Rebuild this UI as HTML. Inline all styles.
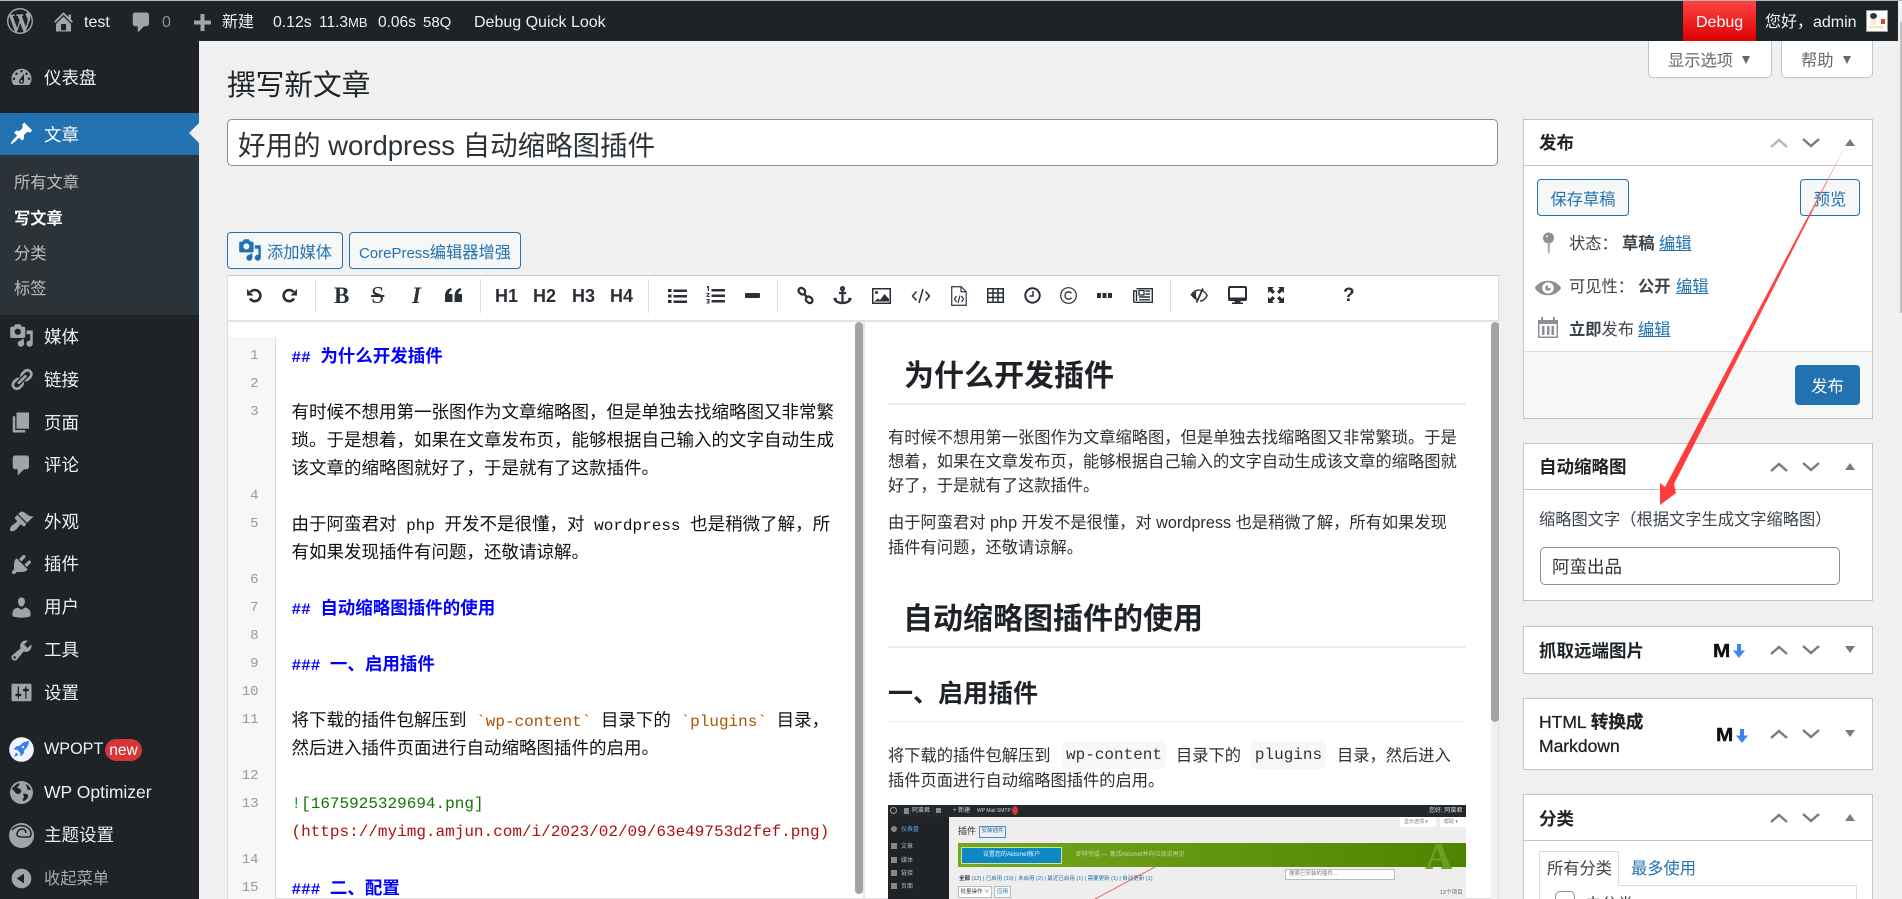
<!DOCTYPE html>
<html lang="zh-CN"><head><meta charset="utf-8"><title>撰写新文章</title>
<style>
html,body{margin:0;padding:0;width:1902px;height:899px;overflow:hidden;background:#f0f0f0}
body{position:relative;font:16.25px/24px "Liberation Sans","Noto Sans CJK SC",sans-serif;color:#3c434a}
.a,.t,svg.i{position:absolute}
.t{white-space:pre;height:24px;line-height:24px}
.s{color:#f0f0f1;font-size:17.5px;left:44px}
.sub{color:#bcbfc2;font-size:16.25px;left:14px}
.bar{color:#f0f0f1;font-size:16px}
svg.i{overflow:visible}
.ic{fill:#a0a5aa}
.box{position:absolute;left:1523px;width:350px;background:#fff;border:1px solid #c3c4c7;box-sizing:border-box}
.hl{position:absolute;left:1524px;width:348px;height:1px;background:#c3c4c7}
.bt{font-weight:700;font-size:17.5px;color:#1d2327;left:1539px}
.btn{position:absolute;box-sizing:border-box;border:1px solid #2271b1;border-radius:4px;background:#f6f7f7;color:#2271b1;text-align:center;font-size:16.25px}
.lnk{color:#2271b1;text-decoration:underline}
.ed{left:291.5px;height:28px;line-height:28px;font-size:17.5px;color:#111}
.m{font:16px/28px "Liberation Mono",monospace}
.hd{color:#00f;font-weight:700}
.ln{left:220px;width:38.5px;text-align:right;height:28px;line-height:28px;font:14px/28px "Liberation Mono",monospace;color:#999}
.o{color:#a50}.g{color:#170}.r{color:#a11}
.p{left:888px;font-size:16.25px;color:#2f2f2f}
.h{font-weight:700;color:#1f2328}
.hr{position:absolute;left:888px;width:578px;height:1px;background:#eaecef}
.code{position:absolute;background:#f7f7f7;border-radius:4px;top:741px;height:28px;font:16px/29px "Liberation Mono",monospace;text-align:center;color:#333}
.tb{fill:#2b3036}
.tbt{position:absolute;white-space:pre;color:#2b3036;top:284px;height:24px;line-height:24px}
.sep{position:absolute;top:279px;width:1px;height:34px;background:#ddd}
.mini{position:absolute;white-space:pre;font-size:6px;line-height:8px}
</style></head><body>

<div class="a" style="left:0;top:0;width:1902px;height:1px;background:#b5b5b5"></div>
<div class="a" style="left:0;top:1px;width:1898px;height:40px;background:#1d2327"></div>
<div class="a" style="left:0;top:41px;width:199px;height:858px;background:#1d2327"></div>
<div class="a" style="left:1898px;top:1px;width:4px;height:898px;background:#f0f0f0"></div>
<div class="a" style="left:1900px;top:22px;width:2px;height:291px;background:#c0c0c0"></div>

<!-- admin bar -->
<svg class="i" style="left:7px;top:8px" width="26" height="26" viewBox="0 0 20 20"><path class="ic" d="M20 10c0-5.51-4.49-10-10-10C4.48 0 0 4.49 0 10c0 5.52 4.48 10 10 10 5.51 0 10-4.48 10-10zM7.78 15.37L4.37 6.22c.55-.02 1.17-.08 1.17-.08.5-.06.44-1.13-.06-1.11 0 0-1.45.11-2.37.11-.18 0-.37 0-.58-.01C4.12 2.69 6.87 1.11 10 1.11c2.33 0 4.45.87 6.05 2.34-.68-.11-1.65.39-1.65 1.58 0 .74.45 1.36.9 2.1.35.61.55 1.36.55 2.46 0 1.49-1.4 5-1.4 5l-3.03-8.37c.54-.02.82-.17.82-.17.5-.05.44-1.25-.06-1.22 0 0-1.44.12-2.38.12-.87 0-2.33-.12-2.33-.12-.5-.03-.56 1.2-.06 1.22l.92.08 1.26 3.41zM17.41 10c.24-.64.74-1.87.43-4.25.7 1.29 1.05 2.71 1.05 4.25 0 3.29-1.73 6.24-4.4 7.78.97-2.59 1.94-5.2 2.92-7.78zM6.1 18.09C3.12 16.65 1.11 13.53 1.11 10c0-1.3.23-2.48.72-3.59C3.25 10.3 4.67 14.2 6.1 18.09zm4.03-6.63l2.58 6.98c-.86.29-1.76.45-2.71.45-.79 0-1.57-.11-2.29-.33.81-2.38 1.62-4.74 2.42-7.1z"/></svg>
<svg class="i" style="left:51px;top:9px" width="25" height="25" viewBox="0 0 20 20"><path class="ic" d="M16 8.5l1.53 1.53-1.06 1.06L10 4.62l-6.47 6.47-1.06-1.06L10 2.5l4 4v-2h2v4zm-6-2.46l6 5.99V18H4v-5.97zM12 17v-5H8v5h4z"/></svg>
<div class="t bar" style="left:84px;top:11px">test</div>
<svg class="i" style="left:129px;top:10px" width="25" height="25" viewBox="0 0 20 20"><path class="ic" d="M5 2h9c1.1 0 2 .9 2 2v7c0 1.1-.9 2-2 2h-2l-5 5v-5H5c-1.1 0-2-.9-2-2V4c0-1.1.9-2 2-2z"/></svg>
<div class="t bar" style="left:162px;top:11px;color:#8b9096">0</div>
<svg class="i" style="left:194px;top:14px" width="17" height="17" viewBox="0 0 17 17"><path class="ic" d="M6.5 0h4v6.5H17v4h-6.5V17h-4v-6.5H0v-4h6.5z"/></svg>
<div class="t bar" style="left:222px;top:11px">新建</div>
<div class="t bar" style="left:273px;top:11px;font-size:15.800px">0.12s</div>
<div class="t bar" style="left:319px;top:11px;font-size:15.500px">11.3<span style="font-size:13px">MB</span></div>
<div class="t bar" style="left:378px;top:11px;font-size:15.500px">0.06s</div>
<div class="t bar" style="left:423px;top:11px;font-size:15px">58Q</div>
<div class="t bar" style="left:474px;top:11px">Debug Quick Look</div>
<div class="a" style="left:1683px;top:1px;width:73px;height:40px;background:linear-gradient(#f44,#d00)"></div>
<div class="t bar" style="left:1696px;top:11px;color:#fff">Debug</div>
<div class="t bar" style="left:1765px;top:11px">您好，admin</div>
<div class="a" style="left:1866px;top:10px;width:22px;height:22px;background:#fff;border:1px solid #9a9a9a;box-sizing:border-box;overflow:hidden">
 <div class="a" style="left:3px;top:2px;width:7px;height:6px;border-radius:50%;background:#333"></div>
 <div class="a" style="left:4px;top:8px;width:5px;height:6px;background:#f6e7d8"></div>
 <div class="a" style="left:14px;top:8px;width:4px;height:5px;background:#d8453a"></div>
 <div class="a" style="left:2px;top:15px;width:14px;height:2px;background:#f3ec9a"></div>
</div>

<!-- sidebar -->
<svg class="i" style="left:9px;top:65px" width="25" height="25" viewBox="0 0 20 20"><path class="ic" d="M3.76 16h12.48c1.1-1.37 1.76-3.11 1.76-5 0-4.42-3.58-8-8-8s-8 3.58-8 8c0 1.89.66 3.63 1.76 5zM10 4c.55 0 1 .45 1 1s-.45 1-1 1-1-.45-1-1 .45-1 1-1zM6 6c.55 0 1 .45 1 1s-.45 1-1 1-1-.45-1-1 .45-1 1-1zm8 0c.55 0 1 .45 1 1s-.45 1-1 1-1-.45-1-1 .45-1 1-1zm-5.37 5.55L12 7v6c0 1.1-.9 2-2 2s-2-.9-2-2c0-.57.24-1.08.63-1.45zM4 10c.55 0 1 .45 1 1s-.45 1-1 1-1-.45-1-1 .45-1 1-1zm12 0c.55 0 1 .45 1 1s-.45 1-1 1-1-.45-1-1 .45-1 1-1zm-5 3c0-.55-.45-1-1-1s-1 .45-1 1 .45 1 1 1 1-.45 1-1z"/></svg>
<div class="t s" style="top:66px">仪表盘</div>
<div class="a" style="left:0;top:113px;width:199px;height:42px;background:#2271b1"></div>
<div class="a" style="left:189px;top:123px;width:0;height:0;border:solid transparent;border-width:10.5px 10px 10.5px 0;border-right-color:#f0f0f0"></div>
<svg class="i" style="left:9px;top:121px" width="25" height="25" viewBox="0 0 20 20"><path fill="#fff" d="M10.44 3.02l1.82-1.82 6.36 6.35-1.83 1.82c-1.05-.68-2.48-.57-3.41.36l-.75.75c-.92.93-1.04 2.35-.35 3.41l-1.83 1.82-2.41-2.41-2.8 2.79c-.42.42-3.38 2.71-3.8 2.29s1.86-3.39 2.28-3.81l2.79-2.79L4.1 9.36l1.83-1.82c1.05.69 2.48.57 3.4-.36l.75-.75c.93-.92 1.05-2.35.36-3.41z"/></svg>
<div class="t s" style="top:123px;color:#fff">文章</div>
<div class="a" style="left:0;top:155px;width:199px;height:160px;background:#2c3338"></div>
<div class="t sub" style="top:171px">所有文章</div>
<div class="t sub" style="top:207px;color:#fff;font-weight:700">写文章</div>
<div class="t sub" style="top:242px">分类</div>
<div class="t sub" style="top:277px">标签</div>

<svg class="i" style="left:9px;top:323px" width="25" height="25" viewBox="0 0 20 20"><path class="ic" d="M13 11V4c0-.55-.45-1-1-1h-1.67L9 1H5L3.67 3H2c-.55 0-1 .45-1 1v7c0 .55.45 1 1 1h10c.55 0 1-.45 1-1zM7 4.5c1.38 0 2.5 1.12 2.5 2.5S8.38 9.5 7 9.5 4.5 8.38 4.5 7 5.62 4.5 7 4.5zM14 6h5v10.5c0 1.38-1.12 2.5-2.5 2.5S14 17.88 14 16.5s1.12-2.5 2.5-2.5c.17 0 .34.02.5.05V9h-3V6zm-4 8.05V13h2v3.5c0 1.38-1.12 2.5-2.5 2.5S7 17.88 7 16.5 8.12 14 9.5 14c.17 0 .34.02.5.05z"/></svg>
<div class="t s" style="top:325px">媒体</div>
<svg class="i" style="left:9px;top:367px" width="25" height="25" viewBox="0 0 20 20"><path class="ic" d="M17.74 2.76c1.68 1.69 1.68 4.41 0 6.1l-1.53 1.52c-1.12 1.12-2.7 1.47-4.14 1.09l2.62-2.61.76-.77.76-.76c.84-.84.84-2.2 0-3.04-.84-.85-2.2-.85-3.04 0l-.77.76-3.38 3.38c-.37-1.44-.02-3.02 1.1-4.14l1.52-1.53c1.69-1.68 4.42-1.68 6.1 0zM8.59 13.43l5.34-5.34c.42-.42.42-1.1 0-1.52-.44-.43-1.13-.39-1.53 0l-5.33 5.34c-.42.42-.42 1.1 0 1.52.44.43 1.13.39 1.52 0zm-.76 2.29l4.14-4.15c.38 1.44.03 3.02-1.09 4.14l-1.52 1.53c-1.69 1.68-4.41 1.68-6.1 0-1.68-1.68-1.68-4.42 0-6.1l1.53-1.52c1.12-1.12 2.7-1.47 4.14-1.1l-4.14 4.15c-.85.84-.85 2.2 0 3.05.84.84 2.2.84 3.04 0z"/></svg>
<div class="t s" style="top:368px">链接</div>
<svg class="i" style="left:9px;top:410px" width="25" height="25" viewBox="0 0 20 20"><path class="ic" d="M6 15V2h10v13H6zm-1 1h8v2H3V5h2v11z"/></svg>
<div class="t s" style="top:411px">页面</div>
<svg class="i" style="left:9px;top:453px" width="25" height="25" viewBox="0 0 20 20"><path class="ic" d="M5 2h9c1.1 0 2 .9 2 2v7c0 1.1-.9 2-2 2h-2l-5 5v-5H5c-1.1 0-2-.9-2-2V4c0-1.1.9-2 2-2z"/></svg>
<div class="t s" style="top:453px">评论</div>
<svg class="i" style="left:9px;top:509px" width="25" height="25" viewBox="0 0 20 20"><path class="ic" d="M14.48 11.06L7.41 3.99l1.5-1.5c.5-.56 2.3-.47 3.51.32 1.21.8 1.43 1.28 2.91 2.1 1.18.64 2.45 1.26 4.45.85zm-.71.71L6.7 4.7 4.93 6.47c-.39.39-.39 1.02 0 1.41l1.06 1.06c.39.39.39 1.03 0 1.42-.6.6-1.43 1.11-2.21 1.69-.35.26-.7.53-1.01.84C1.43 13.73 0 16.29 1.2 17.49c1.19 1.19 3.75-.24 5.07-1.56.31-.31.58-.66.85-1.02.57-.78 1.08-1.61 1.69-2.21.39-.39 1.02-.39 1.41 0l1.06 1.06c.39.39 1.02.39 1.41 0z"/></svg>
<div class="t s" style="top:510px">外观</div>
<svg class="i" style="left:9px;top:552px" width="25" height="25" viewBox="0 0 20 20"><path class="ic" d="M13.11 4.36L9.87 7.6 8 5.73l3.24-3.24c.35-.34 1.05-.2 1.56.32.52.51.66 1.21.31 1.55zm-8 1.77l.91-1.12 9.01 9.01-1.19.84c-.71.71-2.63 1.16-3.82 1.16H6.14L4.9 17.26c-.59.59-1.54.59-2.12 0-.59-.58-.59-1.53 0-2.12l1.24-1.24v-3.88c0-1.13.4-3.19 1.09-3.89zm7.26 3.97l3.24-3.24c.34-.35 1.04-.21 1.55.31.52.51.66 1.21.31 1.55l-3.24 3.25z"/></svg>
<div class="t s" style="top:552px">插件</div>
<svg class="i" style="left:9px;top:595px" width="25" height="25" viewBox="0 0 20 20"><path class="ic" d="M10 9.25c-2.27 0-2.73-3.44-2.73-3.44C7 4.02 7.82 2 9.97 2c2.16 0 2.98 2.02 2.71 3.81 0 0-.41 3.44-2.68 3.44zm0 2.57L12.72 10c2.39 0 4.52 2.33 4.52 4.53v2.49s-3.65 1.13-7.24 1.13c-3.65 0-7.24-1.13-7.24-1.13v-2.49c0-2.25 1.94-4.48 4.47-4.48z"/></svg>
<div class="t s" style="top:595px">用户</div>
<svg class="i" style="left:9px;top:638px" width="25" height="25" viewBox="0 0 20 20"><path class="ic" d="M16.68 9.77c-1.34 1.34-3.3 1.67-4.95.99l-5.41 6.52c-.99.99-2.59.99-3.58 0s-.99-2.59 0-3.57l6.52-5.42c-.68-1.65-.35-3.61.99-4.95 1.28-1.28 3.12-1.62 4.72-1.06l-2.89 2.89 2.82 2.82 2.86-2.87c.53 1.58.18 3.39-1.08 4.65zM3.81 16.21c.4.39 1.04.39 1.43 0 .4-.4.4-1.04 0-1.43-.39-.4-1.03-.4-1.43 0-.39.39-.39 1.03 0 1.43z"/></svg>
<div class="t s" style="top:638px">工具</div>
<svg class="i" style="left:9px;top:680px" width="25" height="25" viewBox="0 0 20 20"><path class="ic" d="M18 16V4c0-.55-.45-1-1-1H3c-.55 0-1 .45-1 1v12c0 .55.45 1 1 1h14c.55 0 1-.45 1-1zM8 11h1c.55 0 1 .45 1 1s-.45 1-1 1H8v1.5c0 .28-.22.5-.5.5s-.5-.22-.5-.5V13H6c-.55 0-1-.45-1-1s.45-1 1-1h1V5.5c0-.28.22-.5.5-.5s.5.22.5.5V11zm5-2h-1c-.55 0-1-.45-1-1s.45-1 1-1h1V5.5c0-.28.22-.5.5-.5s.5.22.5.5V7h1c.55 0 1 .45 1 1s-.45 1-1 1h-1v5.5c0 .28-.22.5-.5.5s-.5-.22-.5-.5V9z"/></svg>
<div class="t s" style="top:681px">设置</div>

<svg class="i" style="left:9px;top:737px" width="25" height="25" viewBox="0 0 25 25"><circle cx="12.5" cy="12.5" r="12.3" fill="#f0f4ff"/><path fill="#3b7df0" d="M20 4c-4 .3-7 1.8-9.300 4.800l-3.500.6-2.700 3.100 3.600.3 3.100 3.100.3 3.600 3.100-2.700.6-3.500C18.200 11 19.700 8 20 4zM7 15.500l2.500 2.500L5 20z"/><circle cx="14" cy="10" r="1.200" fill="#f0f4ff"/></svg>
<div class="t s" style="top:737px;font-size:16.200px">WPOPT</div>
<div class="a" style="left:105px;top:739px;width:37px;height:22px;border-radius:11px;background:#d63638;color:#fff;text-align:center;font-size:15.5px;line-height:24px">new</div>
<svg class="i" style="left:9px;top:780px" width="25" height="25" viewBox="0 0 25 25"><circle cx="12.500" cy="12.500" r="11.500" class="ic"/><path fill="#1d2327" d="M3 8c2-1 4-4 7-5 1 2 0 3-2 4 1 2 3 1 4 3s-1 4-3 4-3-2-4-3-2-2-2-3zM14 14c2-1 4 0 5 1 1 2-2 6-5 6-1-2 1-3 1-4s-1-2-1-3zM17 4c2 1 4 3 5 6-2 0-4 0-4-2s-1-2-1-4z"/></svg>
<div class="t s" style="top:780px">WP Optimizer</div>
<svg class="i" style="left:9px;top:823px" width="25" height="25" viewBox="0 0 25 25"><circle cx="12.500" cy="12.500" r="12.500" class="ic"/><path fill="none" stroke="#1d2327" stroke-width="1.500" d="M3 7c3-3.500 8-5 12-4s7 4 7 8-3 3-8 3-6-1-6-3 2-5 5-5 4 2 4 4"/></svg>
<div class="t s" style="top:823px">主题设置</div>
<svg class="i" style="left:9px;top:866px" width="25" height="25" viewBox="0 0 20 20"><path class="ic" d="M10 2.160c4.330 0 7.840 3.510 7.840 7.840s-3.510 7.840-7.840 7.840S2.160 14.330 2.160 10 5.710 2.160 10 2.160zm2 11.720V6.120L6.180 9.970z"/></svg>
<div class="t" style="left:44px;top:867px;color:#a7aaad">收起菜单</div>

<!-- screen meta -->
<div class="a" style="left:1648px;top:36px;width:124px;height:42px;background:#fff;border:1px solid #c3c4c7;border-radius:0 0 5px 5px;box-sizing:border-box"></div>
<div class="t" style="left:1668px;top:49px;color:#646970">显示选项</div>
<div class="a" style="left:1742px;top:56px;border:solid transparent;border-width:8px 4.500px 0;border-top-color:#646970"></div>
<div class="a" style="left:1781px;top:36px;width:92px;height:42px;background:#fff;border:1px solid #c3c4c7;border-radius:0 0 5px 5px;box-sizing:border-box"></div>
<div class="t" style="left:1801px;top:49px;color:#646970">帮助</div>
<div class="a" style="left:1843px;top:56px;border:solid transparent;border-width:8px 4.500px 0;border-top-color:#646970"></div>
<div class="a" style="left:1648px;top:36px;width:35px;height:5px;background:#1d2327"></div>
<div class="a" style="left:1756px;top:36px;width:120px;height:5px;background:#1d2327"></div>
<div class="a" style="left:1683px;top:36px;width:73px;height:5px;background:#dc0606"></div>

<!-- title -->
<div class="t" style="left:227px;top:71px;height:30px;line-height:30px;font-size:28.700px;color:#1d2327">撰写新文章</div>
<div class="a" style="left:227px;top:119px;width:1271px;height:47px;background:#fff;border:1px solid #8c8f94;border-radius:5px;box-sizing:border-box"></div>
<div class="t" style="left:238px;top:128px;height:36px;line-height:36px;font-size:27.500px;color:#2c3338">好用的 wordpress 自动缩略图插件</div>

<div class="btn" style="left:227px;top:232px;width:116px;height:37px;line-height:41px;padding-left:29px">添加媒体</div>
<svg class="i" style="left:238px;top:238px" width="24" height="24" viewBox="0 0 20 20"><path fill="#2271b1" d="M13 11V4c0-.55-.45-1-1-1h-1.670L9 1H5L3.670 3H2c-.55 0-1 .45-1 1v7c0 .55.45 1 1 1h10c.55 0 1-.45 1-1zM7 4.500c1.380 0 2.500 1.120 2.500 2.500S8.380 9.500 7 9.500 4.500 8.380 4.500 7 5.620 4.500 7 4.500zM14 6h5v10.500c0 1.380-1.120 2.500-2.500 2.500S14 17.880 14 16.500s1.120-2.500 2.500-2.500c.17 0 .34.02.5.05V9h-3V6zm-4 8.050V13h2v3.500c0 1.380-1.120 2.500-2.500 2.500S7 17.880 7 16.500 8.120 14 9.500 14c.17 0 .34.02.5.05z"/></svg>
<div class="btn" style="left:349px;top:232px;width:172px;height:37px;line-height:41px"><span style="font-size:15px">CorePress</span>编辑器增强</div>

<!-- editor shell -->
<div class="a" style="left:227px;top:275px;width:1272px;height:624px;background:#fff;border:1px solid #ddd;border-top-color:#c6c7c9;box-sizing:border-box"></div>
<div class="a" style="left:228px;top:320px;width:1270px;height:2px;background:#e2e2e2"></div>

<!-- toolbar icons -->
<svg class="i" style="left:246px;top:287px" width="17" height="17" viewBox="0 0 17 17"><path fill="none" stroke="#2b3036" stroke-width="2.600" d="M4 11.500A5.600 5.600 0 1 0 4.500 5"/><path class="tb" d="M1 2v6.500h6.500z"/></svg>
<svg class="i" style="left:281px;top:287px" width="17" height="17" viewBox="0 0 17 17"><path fill="none" stroke="#2b3036" stroke-width="2.600" d="M13 11.500A5.600 5.600 0 1 1 12.500 5"/><path class="tb" d="M16 2v6.500H9.500z"/></svg>
<div class="sep" style="left:315px"></div>
<div class="tbt" style="left:334px;font:700 23px/24px 'Liberation Serif',serif">B</div>
<div class="tbt" style="left:371px;font:400 24px/24px 'Liberation Serif',serif;text-decoration:line-through">S</div>
<div class="tbt" style="left:412px;font:italic 700 23px/24px 'Liberation Serif',serif">I</div>
<svg class="i" style="left:445px;top:288px" width="17" height="15" viewBox="0 0 17 15"><path class="tb" d="M0 8c0-4 2-7 6-8l.8 2C5 3 4 4 4 6h3.500v8H0zM9.500 8c0-4 2-7 6-8l.8 2c-1.800 1-2.800 2-2.800 4H17v8H9.500z"/></svg>
<div class="sep" style="left:480px"></div>
<div class="tbt" style="left:495px;font:700 18px/24px 'Liberation Sans',sans-serif">H1</div>
<div class="tbt" style="left:533px;font:700 18px/24px 'Liberation Sans',sans-serif">H2</div>
<div class="tbt" style="left:572px;font:700 18px/24px 'Liberation Sans',sans-serif">H3</div>
<div class="tbt" style="left:610px;font:700 18px/24px 'Liberation Sans',sans-serif">H4</div>
<div class="sep" style="left:648px"></div>
<svg class="i" style="left:668px;top:288px" width="19" height="16" viewBox="0 0 19 16"><path class="tb" d="M0 1h3.500v3H0zM0 6.500h3.500v3H0zM0 12h3.500v3H0zM5.500 1.500H19v2.500H5.500zM5.500 7H19v2.500H5.500zM5.500 12.500H19V15H5.500z"/></svg>
<svg class="i" style="left:706px;top:286px" width="19" height="19" viewBox="0 0 19 19"><path class="tb" d="M5.500 3H19v2.500H5.500zM5.500 8.500H19V11H5.500zM5.500 14H19v2.500H5.500zM1 0h2v5H1.800V1.500H1zM.5 7h3v1L1.800 10h1.800v1H.5v-1l1.800-2H.5zM.5 13h3v4.500H.5v-1h2v-.8H1v-1h1.500V14h-2z"/></svg>
<svg class="i" style="left:745px;top:293px" width="15" height="5" viewBox="0 0 15 5"><rect width="15" height="5" rx="1" class="tb"/></svg>
<div class="sep" style="left:777px"></div>
<svg class="i" style="left:797px;top:287px" width="17" height="17" viewBox="0 0 17 17"><g fill="none" stroke="#2b3036" stroke-width="2.300"><rect x="1.500" y="1.500" width="7" height="5.500" rx="2.700" transform="rotate(40 5 4)"/><rect x="8.500" y="10" width="7" height="5.500" rx="2.700" transform="rotate(40 12 13)"/><path d="M6.500 6.500l4 4"/></g></svg>
<svg class="i" style="left:833px;top:286px" width="19" height="19" viewBox="0 0 19 19"><g fill="none" stroke="#2b3036" stroke-width="2.200"><circle cx="9.500" cy="2.600" r="1.500"/><path d="M9.500 4v13.500M6 7h7M1.500 12c0 3 3.500 5 8 5s8-2 8-5"/></g><path class="tb" d="M0 12.500l3.500-1 .5 3.500zM19 12.500l-3.500-1-.5 3.500z"/></svg>
<svg class="i" style="left:872px;top:288px" width="19" height="16" viewBox="0 0 19 16"><rect x=".75" y=".75" width="17.500" height="14.500" fill="none" stroke="#2b3036" stroke-width="1.500"/><circle cx="4.500" cy="4.500" r="1.500" class="tb"/><path class="tb" d="M2 13.500l4-3 2 1.500 4.500-6 4.500 5v2.500z"/></svg>
<svg class="i" style="left:911px;top:288px" width="20" height="16" viewBox="0 0 20 16"><path fill="none" stroke="#2b3036" stroke-width="1.500" d="M5.500 3.500L1.500 8l4 4.500M14.500 3.500l4 4.500-4 4.500M12 1L8 15"/></svg>
<svg class="i" style="left:951px;top:286px" width="16" height="20" viewBox="0 0 16 20"><path fill="none" stroke="#3a4a58" stroke-width="1.300" d="M.7.7h9.500l5 5v13.600H.7zM10 .7v5h5.200"/><path fill="none" stroke="#2b3036" stroke-width="1.200" d="M5.500 10L3.500 13l2 3M10.500 10l2 3-2 3M9 9.500l-2 7.500"/></svg>
<svg class="i" style="left:987px;top:288px" width="17" height="15" viewBox="0 0 17 15"><path fill="none" stroke="#2b3036" stroke-width="1.500" d="M.75.75h15.500v13.500H.75zM.75 5h15.500M.75 9.500h15.500M6 .75v13.500M11 .75v13.500"/></svg>
<svg class="i" style="left:1024px;top:287px" width="17" height="17" viewBox="0 0 17 17"><circle cx="8.500" cy="8.500" r="7.200" fill="none" stroke="#2b3036" stroke-width="2"/><path fill="none" stroke="#2b3036" stroke-width="1.500" d="M9 4v5H5.500"/></svg>
<svg class="i" style="left:1060px;top:287px" width="17" height="17" viewBox="0 0 17 17"><circle cx="8.500" cy="8.500" r="7.800" fill="none" stroke="#2b3036" stroke-width="1.200"/><path fill="none" stroke="#2b3036" stroke-width="1.300" d="M11.500 6.200a3.700 3.700 0 1 0 0 4.600"/></svg>
<svg class="i" style="left:1097px;top:293px" width="15" height="5" viewBox="0 0 15 5"><path class="tb" d="M0 0h4v5H0zM5.500 0h4v5h-4zM11 0h4v5h-4z"/></svg>
<svg class="i" style="left:1133px;top:288px" width="20" height="15" viewBox="0 0 20 15"><path fill="none" stroke="#2b3036" stroke-width="1.400" d="M3.500.7h15.800v13.600H2A1.300 1.300 0 0 1 .7 13V3h2.800v10M6 11.800h11M6 9h11M12.500 3H17M12.500 6H17"/><rect x="6" y="2.500" width="5" height="4.500" fill="none" stroke="#2b3036" stroke-width="1.300"/></svg>
<div class="sep" style="left:1170px"></div>
<svg class="i" style="left:1190px;top:288px" width="18" height="15" viewBox="0 0 18 15"><path fill="none" stroke="#2b3036" stroke-width="1.300" d="M.8 7.500C3 3.500 6 2 9 2s6 1.500 8.200 5.500C15 11.500 12.500 13 10 13"/><path class="tb" d="M1.500 7.500C3 5 5 3.500 7 3.200c-1.500 1.500-1.500 5 .5 9C4.500 11.500 3 10 1.500 7.500z"/><path fill="none" stroke="#2b3036" stroke-width="1.800" d="M13 .5L6.500 14.500"/></svg>
<svg class="i" style="left:1228px;top:286px" width="19" height="18" viewBox="0 0 19 18"><path class="tb" d="M2 0h15a2 2 0 0 1 2 2v11a2 2 0 0 1-2 2h-4.500v1.500H15V18H4v-1.500h2.500V15H2a2 2 0 0 1-2-2V2a2 2 0 0 1 2-2zM2 2v9.500h15V2z" fill-rule="evenodd"/></svg>
<svg class="i" style="left:1268px;top:287px" width="16" height="16" viewBox="0 0 16 16"><path class="tb" d="M0 0h6L4.200 1.800l2.800 2.800-2.400 2.400-2.800-2.800L0 6zM16 0v6l-1.800-1.800-2.800 2.800-2.400-2.400 2.800-2.800L10 0zM0 16v-6l1.800 1.800 2.800-2.800 2.400 2.400-2.800 2.800L6 16zM16 16h-6l1.800-1.800-2.800-2.800 2.400-2.400 2.800 2.800L16 10z"/></svg>
<div class="tbt" style="left:1343px;font:700 19px/24px 'Liberation Sans',sans-serif">?</div>

<!-- gutter -->
<div class="a" style="left:228px;top:337px;width:47px;height:562px;background:#f7f7f7;border-right:1px solid #ddd"></div>
<div class="t ln" style="top:342px">1</div><div class="t ln" style="top:370px">2</div><div class="t ln" style="top:398px">3</div>
<div class="t ln" style="top:482px">4</div><div class="t ln" style="top:510px">5</div><div class="t ln" style="top:566px">6</div>
<div class="t ln" style="top:594px">7</div><div class="t ln" style="top:622px">8</div><div class="t ln" style="top:650px">9</div>
<div class="t ln" style="top:678px">10</div><div class="t ln" style="top:706px">11</div><div class="t ln" style="top:762px">12</div>
<div class="t ln" style="top:790px">13</div><div class="t ln" style="top:846px">14</div><div class="t ln" style="top:874px">15</div>

<!-- editor text -->
<div class="t ed hd" style="top:342px"><span class="m" style="font-weight:700">## </span>为什么开发插件</div>
<div class="t ed" style="top:398px">有时候不想用第一张图作为文章缩略图，但是单独去找缩略图又非常繁</div>
<div class="t ed" style="top:426px">琐。于是想着，如果在文章发布页，能够根据自己输入的文字自动生成</div>
<div class="t ed" style="top:454px">该文章的缩略图就好了，于是就有了这款插件。</div>
<div class="t ed" style="top:510px">由于阿蛮君对<span class="m"> php </span>开发不是很懂，对<span class="m"> wordpress </span>也是稍微了解，所</div>
<div class="t ed" style="top:538px">有如果发现插件有问题，还敬请谅解。</div>
<div class="t ed hd" style="top:594px"><span class="m" style="font-weight:700">## </span>自动缩略图插件的使用</div>
<div class="t ed hd" style="top:650px"><span class="m" style="font-weight:700">### </span>一、启用插件</div>
<div class="t ed" style="top:706px">将下载的插件包解压到<span class="m"> <span class="o">`wp-content`</span> </span>目录下的<span class="m"> <span class="o">`plugins`</span> </span>目录，</div>
<div class="t ed" style="top:734px">然后进入插件页面进行自动缩略图插件的启用。</div>
<div class="t ed m" style="top:790px"><span style="color:#292">!</span><span class="g">[1675925329694.png]</span></div>
<div class="t ed m r" style="top:818px">(https://myimg.amjun.com/i/2023/02/09/63e49753d2fef.png)</div>
<div class="t ed hd" style="top:874px"><span class="m" style="font-weight:700">### </span>二、配置</div>

<!-- middle scrollbar -->
<div class="a" style="left:855px;top:322px;width:8px;height:572px;background:#a3a3a3;border-radius:4px"></div>

<!-- preview -->
<div class="a" style="left:863px;top:322px;width:2px;height:577px;background:#e6e6e6"></div>
<div class="t h" style="left:904px;top:358px;height:38px;line-height:38px;font-size:30px">为什么开发插件</div>
<div class="hr" style="top:403px;height:2px"></div>
<div class="t p" style="top:426px">有时候不想用第一张图作为文章缩略图，但是单独去找缩略图又非常繁琐。于是</div>
<div class="t p" style="top:450px">想着，如果在文章发布页，能够根据自己输入的文字自动生成该文章的缩略图就</div>
<div class="t p" style="top:474px">好了，于是就有了这款插件。</div>
<div class="t p" style="top:511px">由于阿蛮君对 php 开发不是很懂，对 wordpress 也是稍微了解，所有如果发现</div>
<div class="t p" style="top:536px">插件有问题，还敬请谅解。</div>
<div class="t h" style="left:903px;top:601px;height:38px;line-height:38px;font-size:30px">自动缩略图插件的使用</div>
<div class="hr" style="top:646px;height:2px"></div>
<div class="t h" style="left:888px;top:676px;height:36px;line-height:36px;font-size:25px">一、启用插件</div>
<div class="hr" style="top:721px;height:1px"></div>
<div class="t p" style="top:744px">将下载的插件包解压到</div>
<div class="code" style="left:1062px;width:104px">wp-content</div>
<div class="t p" style="left:1176px;top:744px">目录下的</div>
<div class="code" style="left:1251px;width:75px">plugins</div>
<div class="t p" style="left:1337px;top:744px">目录，然后进入</div>
<div class="t p" style="top:769px">插件页面进行自动缩略图插件的启用。</div>

<!-- mini screenshot -->
<div class="a" style="left:888px;top:805px;width:578px;height:94px;background:#eeeeee;overflow:hidden;filter:blur(.35px)">
 <div class="a" style="left:0;top:0;width:578px;height:12px;background:#23282d"></div>
 <div class="a" style="left:0;top:12px;width:61px;height:82px;background:#1f2327"></div>
 <div class="a" style="left:2px;top:2px;width:7px;height:7px;border-radius:50%;border:1px solid #999;box-sizing:border-box"></div>
 <div class="a" style="left:16px;top:3px;width:5px;height:6px;background:#888"></div>
 <div class="a" style="left:48px;top:3px;width:5px;height:5px;background:#888"></div>
 <div class="mini" style="left:24px;top:2px;color:#cfd2d4">阿蛮君</div>
 <div class="mini" style="left:65px;top:2px;color:#cfd2d4">+ 新建</div>
 <div class="mini" style="left:89px;top:2px;color:#cfd2d4;font-size:5px">WP Mail SMTP</div>
 <div class="a" style="left:124px;top:1px;width:6px;height:9px;border-radius:50%;background:#d63638"></div>
 <div class="mini" style="left:541px;top:2px;color:#dfe1e2">您好, 阿蛮君</div>
 <div class="mini" style="left:13px;top:21px;color:#6fa8dc">仪表盘</div>
 <div class="mini" style="left:13px;top:38px;color:#b5b8ba">文章</div>
 <div class="mini" style="left:13px;top:52px;color:#b5b8ba">媒体</div>
 <div class="mini" style="left:13px;top:65px;color:#b5b8ba">链接</div>
 <div class="mini" style="left:13px;top:78px;color:#b5b8ba">页面</div>
 <div class="a" style="left:3px;top:21px;width:6px;height:6px;background:#888;border-radius:50%"></div>
 <div class="a" style="left:3px;top:38px;width:6px;height:6px;background:#888"></div>
 <div class="a" style="left:3px;top:52px;width:6px;height:6px;background:#888"></div>
 <div class="a" style="left:3px;top:65px;width:6px;height:6px;background:#888"></div>
 <div class="a" style="left:3px;top:78px;width:6px;height:6px;background:#888"></div>
 <div class="mini" style="left:70px;top:20px;font-size:9px;color:#333;line-height:12px">插件</div>
 <div class="mini" style="left:91px;top:21px;width:25px;height:10px;border:1px solid #4b8cc4;color:#2271b1;text-align:center;font-size:5.500px;line-height:9px">安装插件</div>
 <div class="a" style="left:512px;top:12px;width:36px;height:10px;background:#fff"></div>
 <div class="a" style="left:552px;top:12px;width:26px;height:10px;background:#fff"></div>
 <div class="mini" style="left:516px;top:13px;color:#777;font-size:5px">显示选项 ▾</div>
 <div class="mini" style="left:556px;top:13px;color:#777;font-size:5px">帮助 ▾</div>
 <div class="a" style="left:70px;top:38px;width:508px;height:24px;background:linear-gradient(90deg,#74a71d,#4f8400)"></div>
 <div class="a" style="left:73px;top:42px;width:101px;height:17px;background:#0d88c4;border:1px solid #cfe39a;box-sizing:border-box;color:#e9f3f8;font-size:6px;line-height:15px;text-align:center">设置您的Akismet帐户</div>
 <div class="mini" style="left:188px;top:46px;color:#c6daa0">即将完成 — 激活Akismet并向垃圾说再见</div>
 <div class="mini" style="left:537px;top:33px;font:700 38px/38px 'Liberation Serif',serif;color:#6f9e25">A</div>
 <div class="mini" style="left:71px;top:70px;color:#2271b1;font-size:5.500px"><span style="color:#333;font-weight:700">全部</span> (12) | 已启用 (10) | 未启用 (2) | 最近已启用 (1) | 需要更新 (1) | 自动更新 (1)</div>
 <div class="a" style="left:397px;top:64px;width:110px;height:11px;background:#fff;border:1px solid #bbb;box-sizing:border-box;color:#777;font-size:5.500px;line-height:9px;padding-left:3px;white-space:pre">搜索已安装的插件...</div>
 <div class="a" style="left:70px;top:81px;width:34px;height:12px;background:#fff;border:1px solid #bbb;box-sizing:border-box;color:#444;font-size:5.500px;line-height:10px;text-align:center">批量操作 ∨</div>
 <div class="a" style="left:106px;top:81px;width:17px;height:12px;background:#f6f7f7;border:1px solid #bbb;box-sizing:border-box;color:#2271b1;font-size:5.500px;line-height:10px;text-align:center">应用</div>
 <div class="mini" style="left:552px;top:84px;color:#666;font-size:5.500px">12个项目</div>
</div>
<svg class="i" style="left:0;top:0;pointer-events:none" width="1902" height="899"><path d="M1155 867L1095 899" stroke="#f24a4a" stroke-width=".8" fill="none"/></svg>

<!-- preview scrollbar -->
<div class="a" style="left:1491px;top:722px;width:7px;height:177px;background:#f1f1f1"></div>
<div class="a" style="left:1491px;top:322px;width:8px;height:400px;background:#a3a3a3;border-radius:4px"></div>

<!-- publish box -->
<div class="box" style="top:119px;height:300px"></div>
<div class="hl" style="top:165px"></div>
<div class="t bt" style="top:131px">发布</div>
<svg class="i" style="left:1770px;top:138px" width="18" height="10" viewBox="0 0 18 10"><path d="M1 9l8-7 8 7" fill="none" stroke="#b4b6b9" stroke-width="2.400"/></svg>
<svg class="i" style="left:1802px;top:138px" width="18" height="10" viewBox="0 0 18 10"><path d="M1 1l8 7 8-7" fill="none" stroke="#787c82" stroke-width="2.400"/></svg>
<svg class="i" style="left:1845px;top:139px" width="10" height="7" viewBox="0 0 10 7"><path d="M5 0l5 7H0z" fill="#787c82"/></svg>
<div class="btn" style="left:1537px;top:179px;width:92px;height:37px;line-height:40px">保存草稿</div>
<div class="btn" style="left:1800px;top:179px;width:60px;height:37px;line-height:40px">预览</div>
<svg class="i" style="left:1542px;top:232px" width="13" height="22" viewBox="0 0 13 22"><circle cx="6.500" cy="6" r="5.500" fill="#8c8f94"/><path d="M5.500 10h2.500l-.4 11.500H6z" fill="#a7aaad"/><circle cx="5" cy="4.500" r="1.200" fill="#d8d8d8"/></svg>
<div class="t" style="left:1569px;top:232px">状态：</div>
<div class="t" style="left:1622px;top:232px;font-weight:700">草稿</div>
<div class="t lnk" style="left:1659px;top:232px">编辑</div>
<svg class="i" style="left:1535px;top:275px" width="26" height="26" viewBox="0 0 20 20"><path fill="#8c8f94" d="M10 4.400C3.439 4.400 0 9.232 0 10c0 .766 3.439 5.600 10 5.600 6.560 0 10-4.834 10-5.600 0-.768-3.440-5.600-10-5.600zm0 9.907c-2.455 0-4.445-1.928-4.445-4.307S7.545 5.691 10 5.691s4.444 1.930 4.444 4.309-1.989 4.307-4.444 4.307zM10 10c-.407-.447.663-2.154 0-2.154-1.228 0-2.223.965-2.223 2.154s.995 2.154 2.223 2.154c1.227 0 2.223-.965 2.223-2.154 0-.547-1.877.379-2.223 0z"/></svg>
<div class="t" style="left:1569px;top:275px">可见性：</div>
<div class="t" style="left:1638px;top:275px;font-weight:700">公开</div>
<div class="t lnk" style="left:1676px;top:275px">编辑</div>
<svg class="i" style="left:1538px;top:317px" width="20" height="21" viewBox="0 0 20 21"><path fill="#8c8f94" fill-rule="evenodd" d="M3 0h2v3H15V0h2v3h3v18H0V3h3zM1.500 7v12.500h17V7zM4 9h2.500v9H4zM9 9h2.500v9H9zM13.500 9H16v9h-2.500z"/></svg>
<div class="t" style="left:1569px;top:318px"><b>立即</b>发布</div>
<div class="t lnk" style="left:1638px;top:318px">编辑</div>
<div class="a" style="left:1524px;top:351px;width:348px;height:67px;background:#f6f7f7;border-top:1px solid #dcdcde;box-sizing:border-box"></div>
<div class="a" style="left:1795px;top:365px;width:65px;height:40px;background:#2271b1;border-radius:4px;color:#fff;text-align:center;line-height:44px;font-size:16.250px">发布</div>

<!-- 自动缩略图 -->
<div class="box" style="top:443px;height:158px"></div>
<div class="hl" style="top:489px"></div>
<div class="t bt" style="top:455px">自动缩略图</div>
<svg class="i" style="left:1770px;top:462px" width="18" height="10" viewBox="0 0 18 10"><path d="M1 9l8-7 8 7" fill="none" stroke="#787c82" stroke-width="2.400"/></svg>
<svg class="i" style="left:1802px;top:462px" width="18" height="10" viewBox="0 0 18 10"><path d="M1 1l8 7 8-7" fill="none" stroke="#787c82" stroke-width="2.400"/></svg>
<svg class="i" style="left:1845px;top:463px" width="10" height="7" viewBox="0 0 10 7"><path d="M5 0l5 7H0z" fill="#787c82"/></svg>
<div class="t" style="left:1539px;top:508px">缩略图文字（根据文字生成文字缩略图）</div>
<div class="a" style="left:1540px;top:547px;width:300px;height:38px;background:#fff;border:1px solid #8c8f94;border-radius:5px;box-sizing:border-box"></div>
<div class="t" style="left:1552px;top:555px;font-size:17.500px;color:#2c3338">阿蛮出品</div>

<!-- 抓取远端图片 -->
<div class="box" style="top:626px;height:48px"></div>
<div class="t bt" style="top:639px">抓取远端图片</div>
<div class="t" style="left:1713px;top:639px;font:700 18px/24px 'Liberation Sans',sans-serif;color:#111;transform:scaleX(1.150);transform-origin:left;-webkit-text-stroke:.4px #111">M</div>
<svg class="i" style="left:1733px;top:644px" width="12" height="14" viewBox="0 0 12 14"><path d="M4 0h4v6.500h4L6 14 0 6.500h4z" fill="#3d85f5"/></svg>
<svg class="i" style="left:1770px;top:645px" width="18" height="10" viewBox="0 0 18 10"><path d="M1 9l8-7 8 7" fill="none" stroke="#787c82" stroke-width="2.400"/></svg>
<svg class="i" style="left:1802px;top:645px" width="18" height="10" viewBox="0 0 18 10"><path d="M1 1l8 7 8-7" fill="none" stroke="#787c82" stroke-width="2.400"/></svg>
<svg class="i" style="left:1845px;top:646px" width="10" height="7" viewBox="0 0 10 7"><path d="M5 7L0 0h10z" fill="#787c82"/></svg>

<!-- HTML 转换成 -->
<div class="box" style="top:698px;height:72px"></div>
<div class="t" style="left:1539px;top:710px;font-size:17.500px;color:#1d2327;-webkit-text-stroke:.3px #1d2327">HTML <b>转换成</b></div>
<div class="t" style="left:1539px;top:734px;font-size:17.500px;color:#1d2327;-webkit-text-stroke:.3px #1d2327">Markdown</div>
<div class="t" style="left:1716px;top:723px;font:700 18px/24px 'Liberation Sans',sans-serif;color:#111;transform:scaleX(1.150);transform-origin:left;-webkit-text-stroke:.4px #111">M</div>
<svg class="i" style="left:1736px;top:729px" width="12" height="14" viewBox="0 0 12 14"><path d="M4 0h4v6.500h4L6 14 0 6.500h4z" fill="#3d85f5"/></svg>
<svg class="i" style="left:1770px;top:729px" width="18" height="10" viewBox="0 0 18 10"><path d="M1 9l8-7 8 7" fill="none" stroke="#787c82" stroke-width="2.400"/></svg>
<svg class="i" style="left:1802px;top:729px" width="18" height="10" viewBox="0 0 18 10"><path d="M1 1l8 7 8-7" fill="none" stroke="#787c82" stroke-width="2.400"/></svg>
<svg class="i" style="left:1845px;top:730px" width="10" height="7" viewBox="0 0 10 7"><path d="M5 7L0 0h10z" fill="#787c82"/></svg>

<!-- 分类 -->
<div class="box" style="top:794px;height:110px"></div>
<div class="hl" style="top:840px"></div>
<div class="t bt" style="top:807px">分类</div>
<svg class="i" style="left:1770px;top:813px" width="18" height="10" viewBox="0 0 18 10"><path d="M1 9l8-7 8 7" fill="none" stroke="#787c82" stroke-width="2.400"/></svg>
<svg class="i" style="left:1802px;top:813px" width="18" height="10" viewBox="0 0 18 10"><path d="M1 1l8 7 8-7" fill="none" stroke="#787c82" stroke-width="2.400"/></svg>
<svg class="i" style="left:1845px;top:814px" width="10" height="7" viewBox="0 0 10 7"><path d="M5 0l5 7H0z" fill="#787c82"/></svg>
<div class="a" style="left:1539px;top:885px;width:318px;height:14px;border:1px solid #dcdcde;box-sizing:border-box;border-bottom:0"></div>
<div class="a" style="left:1539px;top:851px;width:80px;height:35px;background:#fff;border:1px solid #dcdcde;border-bottom:0;box-sizing:border-box"></div>
<div class="t" style="left:1547px;top:857px">所有分类</div>
<div class="t" style="left:1631px;top:857px;color:#2271b1">最多使用</div>
<div class="a" style="left:1555px;top:891px;width:20px;height:20px;border:1px solid #8c8f94;border-radius:5px;box-sizing:border-box;background:#fff"></div>
<div class="t" style="left:1585px;top:893px">未分类</div>

<!-- red annotation arrow -->
<svg class="i" style="left:0;top:0;pointer-events:none" width="1902" height="899">
<defs><linearGradient id="rg" x1="1844" y1="149" x2="1660" y2="505" gradientUnits="userSpaceOnUse"><stop offset="0" stop-color="#f88" stop-opacity=".5"/><stop offset=".2" stop-color="#f44"/><stop offset="1" stop-color="#ff3a3a"/></linearGradient></defs>
<polygon fill="url(#rg)" points="1844,149 1674,484 1676,493 1660,505 1660,483 1665,487 1843.500,149"/>
</svg>
</body></html>
